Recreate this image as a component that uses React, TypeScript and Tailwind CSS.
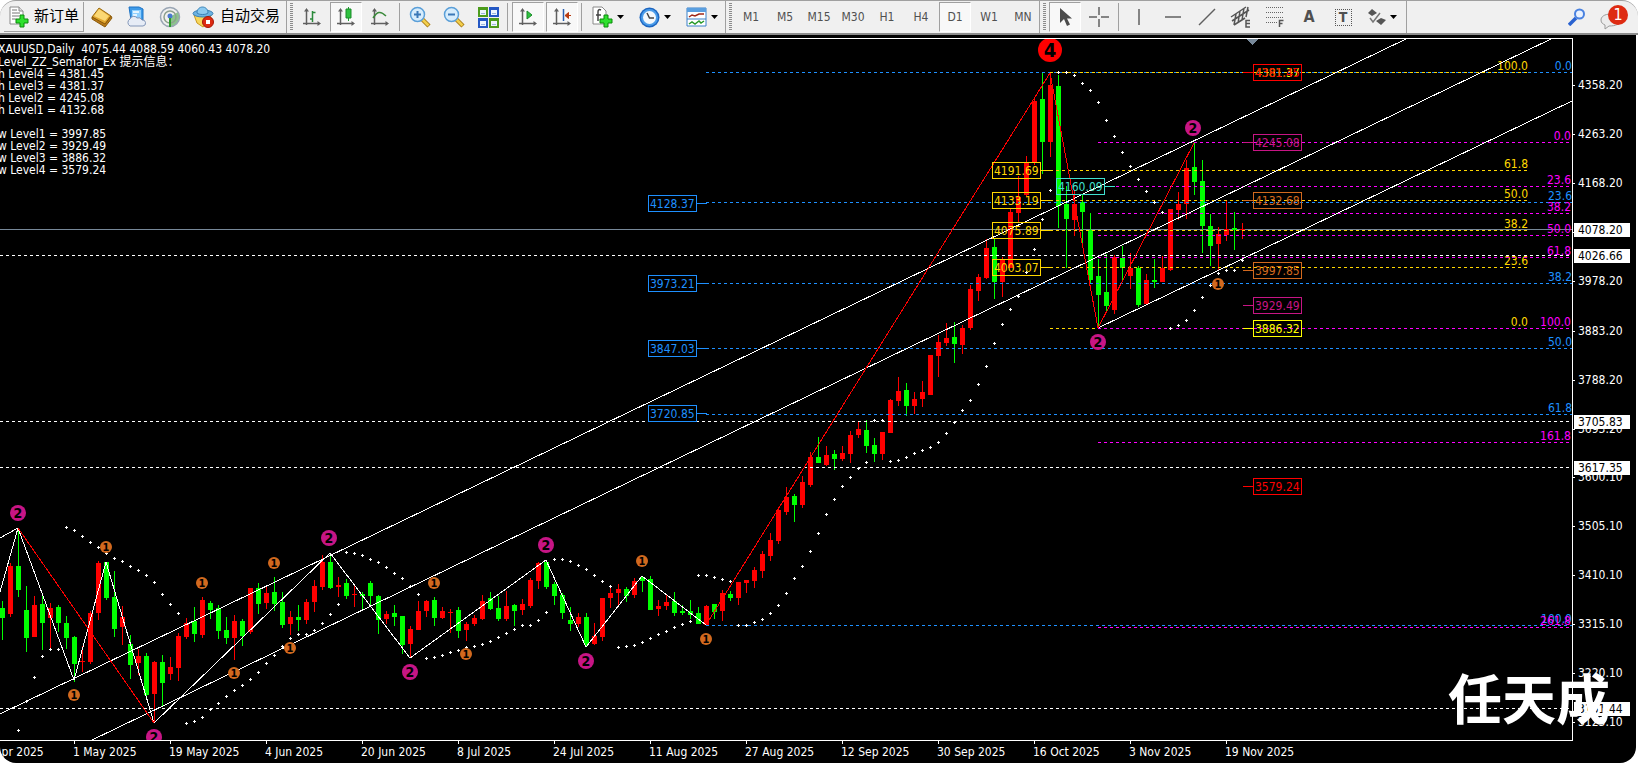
import type { ReactNode } from 'react'

type Candle = [dir: 'u' | 'd', high: number, top: number, bottom: number, low: number]

/* ---------------- SCALE ---------------- */
const TOP = 39
const BAR = 8
const barX = (i: number) => 2 + i * BAR
const priceY = (price: number) => Math.round(84 + (4358.2 - price) / 1.9346)

/* ---------------- SERIES ---------------- */
const CANDLES: Candle[] = [
  ['d', 601, 608, 618, 640], ['u', 563, 566, 614, 617], ['d', 528, 566, 590, 597], ['d', 586, 610, 638, 652],
  ['u', 596, 605, 637, 637], ['d', 595, 604, 623, 650], ['u', 603, 608, 618, 649], ['d', 605, 607, 623, 632],
  ['d', 616, 623, 638, 649], ['d', 636, 637, 664, 682], ['u', 646, 661, 662, 672], ['u', 611, 613, 662, 664],
  ['u', 561, 563, 613, 620], ['d', 562, 562, 598, 600], ['d', 571, 597, 629, 637], ['u', 606, 617, 627, 645],
  ['d', 635, 644, 665, 679], ['u', 649, 656, 663, 675], ['d', 653, 656, 695, 700], ['u', 661, 662, 694, 723],
  ['d', 655, 662, 683, 707], ['u', 657, 667, 674, 680], ['u', 633, 636, 668, 681], ['u', 618, 623, 637, 639],
  ['d', 607, 621, 634, 642], ['u', 597, 600, 635, 638], ['d', 601, 603, 610, 619], ['d', 605, 608, 631, 639],
  ['d', 617, 630, 638, 644], ['u', 615, 621, 638, 660], ['d', 619, 621, 636, 646], ['u', 588, 588, 632, 634],
  ['d', 583, 588, 604, 614], ['u', 587, 593, 603, 609], ['d', 577, 592, 604, 611], ['d', 592, 602, 625, 628],
  ['u', 611, 617, 624, 635], ['d', 605, 617, 620, 631], ['u', 599, 602, 620, 624], ['u', 580, 586, 602, 612],
  ['u', 555, 562, 587, 590], ['d', 553, 562, 588, 589], ['u', 577, 585, 587, 597], ['d', 579, 583, 596, 599],
  ['u', 586, 594, 595, 607], ['d', 592, 594, 596, 610], ['d', 581, 583, 596, 606], ['d', 595, 596, 620, 634],
  ['u', 611, 614, 619, 624], ['d', 605, 613, 617, 626], ['d', 616, 616, 645, 654], ['u', 626, 629, 644, 658],
  ['u', 601, 611, 630, 630], ['u', 600, 601, 611, 617], ['d', 597, 600, 618, 626], ['u', 607, 611, 618, 619],
  ['u', 609, 612, 613, 633], ['d', 607, 610, 631, 638], ['u', 622, 624, 630, 641], ['u', 615, 618, 624, 626],
  ['u', 595, 601, 619, 620], ['d', 592, 598, 609, 610], ['d', 596, 608, 619, 621], ['u', 591, 606, 619, 621],
  ['d', 604, 605, 611, 626], ['u', 599, 604, 610, 615], ['u', 578, 580, 606, 608], ['u', 562, 563, 581, 589],
  ['d', 560, 562, 587, 589], ['d', 582, 584, 596, 605], ['d', 593, 595, 613, 619], ['d', 607, 620, 624, 631],
  ['u', 613, 617, 624, 627], ['d', 613, 617, 645, 647], ['u', 623, 636, 644, 645], ['u', 598, 598, 637, 641],
  ['u', 588, 593, 598, 608], ['u', 584, 589, 593, 606], ['d', 587, 589, 596, 602], ['u', 578, 581, 595, 598],
  ['d', 576, 577, 581, 592], ['d', 576, 579, 610, 610], ['u', 600, 606, 609, 616], ['u', 595, 602, 606, 610],
  ['d', 592, 601, 613, 616], ['d', 605, 611, 613, 615], ['d', 600, 611, 615, 619], ['d', 607, 613, 624, 624],
  ['u', 605, 606, 625, 625], ['d', 604, 604, 612, 619], ['u', 590, 593, 611, 621], ['d', 591, 594, 598, 601],
  ['u', 582, 582, 598, 605], ['u', 580, 580, 583, 593], ['u', 567, 570, 581, 588], ['u', 551, 554, 571, 578],
  ['u', 533, 540, 556, 561], ['u', 507, 510, 541, 544], ['u', 487, 497, 512, 515], ['d', 494, 496, 505, 522],
  ['u', 476, 482, 505, 508], ['u', 452, 457, 485, 487], ['d', 437, 457, 463, 463], ['u', 446, 455, 465, 466],
  ['d', 450, 454, 459, 470], ['u', 446, 453, 459, 461], ['u', 431, 435, 454, 463], ['u', 422, 429, 435, 438],
  ['d', 420, 430, 446, 453], ['d', 438, 445, 454, 462], ['u', 432, 432, 454, 460], ['u', 399, 400, 433, 433],
  ['u', 377, 391, 401, 406], ['d', 383, 390, 406, 416], ['u', 392, 399, 406, 414], ['u', 381, 392, 399, 407],
  ['u', 355, 355, 395, 395], ['u', 335, 342, 356, 377], ['u', 323, 338, 343, 346], ['d', 322, 337, 344, 363],
  ['u', 325, 328, 345, 354], ['u', 285, 289, 328, 330], ['u', 274, 277, 291, 301], ['u', 239, 248, 278, 279],
  ['d', 238, 247, 282, 299], ['u', 257, 260, 282, 297], ['u', 209, 212, 268, 268], ['u', 176, 197, 213, 222],
  ['u', 156, 163, 195, 197], ['u', 98, 101, 163, 165], ['d', 73, 99, 142, 174], ['u', 73, 85, 142, 157],
  ['d', 75, 86, 206, 228], ['d', 186, 204, 219, 268], ['u', 190, 204, 220, 236], ['d', 195, 202, 212, 247],
  ['d', 213, 230, 280, 283], ['d', 259, 276, 295, 328], ['d', 254, 292, 306, 312], ['u', 255, 257, 310, 314],
  ['d', 246, 258, 268, 281], ['u', 253, 268, 276, 289], ['d', 266, 268, 305, 307], ['u', 274, 280, 304, 304],
  ['d', 259, 280, 282, 288], ['u', 256, 268, 282, 282], ['u', 209, 209, 270, 271], ['u', 192, 204, 210, 220],
  ['u', 160, 168, 204, 219], ['d', 143, 167, 182, 195], ['d', 160, 181, 226, 253], ['d', 214, 226, 246, 266],
  ['u', 227, 234, 244, 271], ['u', 200, 229, 235, 241], ['d', 212, 228, 230, 250], ['u', 223, 229, 230, 239],
]

// parabolic SAR, one value per bar starting at bar 2
const SAR = [
  730, 701, 677, 656, 649, 649, 527, 530, 536, 542, 547, 553, 558, 561, 566, 570, 575, 582, 594, 604, 613,
  723, 721, 717, 709, 703, 696, 690, 685, 679, 672, 663, 655, 646, 638, 634, 634, 630, 623, 614, 604,
  552, 553, 555, 559, 562, 567, 573, 578, 586, 594, 658, 657, 655, 652, 650, 647, 646, 644, 641, 637, 633,
  629, 625, 625, 620, 612, 559, 559, 561, 565, 569, 575, 581, 586, 647, 646, 645, 642, 638, 634, 631, 627,
  624, 621, 575, 575, 577, 579, 581, 625, 625, 622, 619, 613, 605, 593, 578, 566, 551, 533, 514, 499, 486,
  477, 468, 462, 420, 420, 461, 460, 457, 453, 450, 447, 442, 433, 422, 410, 400, 384, 366, 343, 324, 309,
  296, 272, 249, 219, 190, 72, 72, 75, 83, 90, 102, 120, 136, 152, 166, 179, 191, 202, 212, 328, 325, 320,
  310, 297, 285, 273, 270, 270, 260,
]

const ZIGZAG = '0,592 18,528 74,680 106,562 154,723 330,553 410,658 546,560 586,647 642,576 706,625'

const CHANNELS = [
  [0, 714, 1406, 39],
  [92, 740, 1551, 39],
  [1098, 328, 1572, 101],
  [0, 538, 18, 528],
]

const FIBS = [
  { color: '#1e90ff', from: 706, to: 1572, rows: [['0.0', 72], ['23.6', 202], ['38.2', 283], ['50.0', 348], ['61.8', 414], ['100.0', 625]] },
  { color: '#ffd700', from: 1050, to: 1528, rows: [['100.0', 72], ['61.8', 170], ['50.0', 200], ['38.2', 230], ['23.6', 267], ['0.0', 328]] },
  { color: '#ff00ff', from: 1098, to: 1571, rows: [['0.0', 142], ['23.6', 186], ['38.2', 213], ['50.0', 235], ['61.8', 257], ['100.0', 328], ['161.8', 442], ['261.8', 627]] },
] as const

const TAGS: [x: number, y: number, color: string, text: string][] = [
  [648, 203, '#1e90ff', '4128.37'],
  [648, 283, '#1e90ff', '3973.21'],
  [648, 348, '#1e90ff', '3847.03'],
  [648, 413, '#1e90ff', '3720.85'],
  [992, 170, '#ffd700', '4191.69'],
  [992, 200, '#ffd700', '4133.19'],
  [992, 230, '#ffd700', '4075.89'],
  [992, 267, '#ffd700', '4003.07'],
  [1056, 186, '#40e0d0', '4160.09'],
  [1253, 72, '#ffff00', '4381.37'],
  [1253, 72, '#ff0000', '4381.45'],
  [1253, 142, '#c71585', '4245.08'],
  [1253, 200, '#d2691e', '4132.68'],
  [1253, 270, '#d2691e', '3997.85'],
  [1253, 305, '#c71585', '3929.49'],
  [1253, 328, '#ffff00', '3886.32'],
  [1253, 486, '#ff0000', '3579.24'],
]

const MARKS: [n: 1 | 2 | 4, x: number, y: number][] = [
  [2, 18, 513], [2, 154, 737], [2, 329, 538], [2, 410, 672], [2, 546, 545], [2, 586, 661], [2, 1193, 128], [2, 1098, 342],
  [1, 106, 547], [1, 202, 583], [1, 274, 563], [1, 234, 673], [1, 290, 648], [1, 74, 695], [1, 434, 583],
  [1, 466, 654], [1, 642, 561], [1, 706, 639], [1, 1218, 284], [4, 1050, 50],
]

const MARK_STYLE = {
  1: { r: 6, fill: '#d2691e', size: 11 },
  2: { r: 8, fill: '#c71585', size: 14 },
  4: { r: 12, fill: '#ff0000', size: 20 },
}

const H_LINES = [4026.66, 3705.83, 3617.35, 3151.44]
const AXIS = [4358.2, 4263.2, 4168.2, 4073.2, 3978.2, 3883.2, 3788.2, 3693.2, 3600.1, 3505.1, 3410.1, 3315.1, 3220.1, 3125.1]
const DATES = [
  '11 Apr 2025', '1 May 2025', '19 May 2025', '4 Jun 2025', '20 Jun 2025', '8 Jul 2025', '24 Jul 2025',
  '11 Aug 2025', '27 Aug 2025', '12 Sep 2025', '30 Sep 2025', '16 Oct 2025', '3 Nov 2025', '19 Nov 2025',
]

const INFO = [
  'h Level4 = 4381.45', 'h Level3 = 4381.37', 'h Level2 = 4245.08', 'h Level1 = 4132.68', '',
  'w Level1 = 3997.85', 'w Level2 = 3929.49', 'w Level3 = 3886.32', 'w Level4 = 3579.24',
]

/* ---------------- TOOLBAR PARTS ---------------- */
function Tool({ label, pressed, children }: { label: string; pressed?: boolean; children: ReactNode }) {
  return (
    <button
      type="button"
      aria-label={label}
      aria-pressed={pressed}
      className={
        pressed
          ? 'flex h-[30px] w-8 shrink-0 items-center justify-center border border-t-[#a0a0a0] border-l-[#a0a0a0] border-r-white border-b-white bg-[#f8f8f8] text-xs text-[#505050]'
          : 'flex h-[30px] w-8 shrink-0 items-center justify-center text-xs text-[#505050]'
      }
    >
      {children}
    </button>
  )
}

function DropTool({ label, children }: { label: string; children: ReactNode }) {
  return (
    <button type="button" aria-label={label} className="flex h-[30px] w-[45px] shrink-0 items-center gap-1 pl-1.5">
      {children}
      <svg width="8" height="4" viewBox="0 0 8 4"><path d="M0 0h7L3.500 4z" fill="#000" /></svg>
    </button>
  )
}

const Sep = () => <div className="mx-px h-7 w-0.5 shrink-0 border-l border-[#a0a0a0]" />

function Group({ grip = true, children }: { grip?: boolean; children: ReactNode }) {
  return (
    <div className="flex h-8 shrink-0 items-center gap-0.5 border-r border-[#a0a0a0]">
      {grip && (
        <svg width="7" height="28" viewBox="0 0 7 28" shapeRendering="crispEdges">
          <path d="M4.500 0v28" stroke="#8c8c8c" strokeWidth="3" strokeDasharray="1 1" />
        </svg>
      )}
      {children}
    </div>
  )
}

/* ---------------- ICONS ---------------- */
function Axes({ children }: { children?: ReactNode }) {
  return (
    <svg width="20" height="20" viewBox="0 0 20 20" fill="none">
      <path d="M4.500 3v15M1 16.500h16" stroke="#606060" strokeWidth="1.500" />
      <path d="M2 4.500 4.500 1 7 4.500zM15.500 14l3.500 2.500-3.500 2.500z" fill="#606060" />
      {children}
    </svg>
  )
}

const PlusGreen = () => (
  <path d="M12 9h4v4h4v4h-4v4h-4v-4H8v-4h4z" fill="#2ee02e" stroke="#0a8a0a" />
)

const NewOrderIcon = () => (
  <svg width="22" height="22" viewBox="0 0 22 22">
    <path d="M2 1h9l4 4v13H2z" fill="#fff" stroke="#8a8a8a" />
    <path d="M11 1v4h4" fill="#ddd" stroke="#8a8a8a" />
    <path d="M4 4h5M4 7h8M4 10h7M4 13h4" stroke="#777" />
    <PlusGreen />
  </svg>
)

const BookIcon = () => (
  <svg width="22" height="22" viewBox="0 0 22 22">
    <path d="M1 11 8 2l12 8-6 9z" fill="#e0a52e" stroke="#9a6a10" />
    <path d="M3 10 8 3l10 7-4 5z" fill="#fbd874" />
    <path d="M1 11v2l13 8 7-9-1-2-6 8z" fill="#b97a18" stroke="#8a5a0c" />
  </svg>
)

const ServerIcon = () => (
  <svg width="22" height="22" viewBox="0 0 22 22">
    <path d="M4 1h10l4 2v11H6z" fill="#3f9be8" stroke="#1c72c4" />
    <path d="M7 4h9v8H7z" fill="#8fd0ff" />
    <path d="M8 6h6M8 9h4" stroke="#fff" strokeWidth="1.500" />
    <path d="M5 20a4 4 0 0 1 0-7 4 4 0 0 1 7-1 4 4 0 0 1 5 2 3 3 0 0 1 1 6z" fill="#e6ecf6" stroke="#8296b8" />
  </svg>
)

const SignalIcon = () => (
  <svg width="22" height="22" viewBox="0 0 22 22" fill="none">
    <path d="M11 11v10a10 10 0 0 0 8-15z" fill="#8cc48c" />
    <circle cx="11" cy="11" r="9.500" stroke="#9aa6b4" strokeWidth="1.500" />
    <circle cx="11" cy="11" r="6" stroke="#8ea08e" strokeWidth="1.500" />
    <circle cx="11" cy="10" r="2.500" fill="#4a7ad0" />
    <path d="M11 12v9" stroke="#2e9a2e" strokeWidth="2" />
  </svg>
)

const AutoTradeIcon = () => (
  <svg width="22" height="22" viewBox="0 0 22 22">
    <path d="M2 9h17l-3 8-5 4-6-4z" fill="#f7d75c" stroke="#c9981e" />
    <ellipse cx="11" cy="7.500" rx="10" ry="3.500" fill="#6db3e2" stroke="#3a80b4" />
    <path d="M5 7c0-8 11-8 11 0-2 2-9 2-11 0z" fill="#8ccaf0" stroke="#3a80b4" />
    <circle cx="16" cy="16" r="5.500" fill="#dd2a12" stroke="#a61806" />
    <path d="M14 14h4v4h-4z" fill="#fff" />
  </svg>
)

function ZoomIcon({ plus }: { plus?: boolean }) {
  return (
    <svg width="22" height="22" viewBox="0 0 22 22" fill="none">
      <path d="m13 13 7 7" stroke="#a87c18" strokeWidth="4.500" />
      <path d="m13 13 6.500 6.500" stroke="#f2cf4c" strokeWidth="2.500" />
      <circle cx="8.500" cy="8.500" r="7" fill="#d6ecfc" stroke="#5a9fd8" strokeWidth="1.500" />
      <path d={plus ? 'M5 8.500h7M8.500 5v7' : 'M5 8.500h7'} stroke="#3a78b8" strokeWidth="2" />
    </svg>
  )
}

const TileIcon = () => (
  <svg width="21" height="21" viewBox="0 0 21 21" shapeRendering="crispEdges">
    <path d="M0 0h10v10H0zM11 11h10v10H11z" fill="#4c9c1c" />
    <path d="M11 0h10v10H11zM0 11h10v10H0z" fill="#2458c4" />
    <path d="M2 3h6v5H2zM13 3h6v5h-6zM2 14h6v5H2zM13 14h6v5h-6z" fill="#eef6ff" />
    <path d="M3 6h4M14 6h4M3 17h4M14 17h4" stroke="#9cb8dc" />
  </svg>
)

const IndicatorIcon = () => (
  <svg width="21" height="22" viewBox="0 0 21 22">
    <path d="M1 1h9l4 4v13H1z" fill="#fff" stroke="#8a8a8a" />
    <path d="M9 4c-2-1-3 0-3 2v9M4 9h5" fill="none" stroke="#444" strokeWidth="1.500" />
    <PlusGreen />
  </svg>
)

const ClockIcon = () => (
  <svg width="21" height="21" viewBox="0 0 21 21">
    <circle cx="10.500" cy="10.500" r="10" fill="#1d66c0" />
    <circle cx="10.500" cy="10.500" r="8.500" fill="#4a9cea" />
    <circle cx="10.500" cy="10.500" r="6.500" fill="#f4f8fc" />
    <path d="M8 6l2.500 5H15" fill="none" stroke="#444" strokeWidth="1.500" />
  </svg>
)

const TemplateIcon = () => (
  <svg width="21" height="20" viewBox="0 0 21 20" fill="none">
    <path d="M1 1h19v18H1z" fill="#fff" stroke="#3a80c8" />
    <path d="M1 1h19v4H1z" fill="#5a9fe0" />
    <path d="M1 12h19" stroke="#3a80c8" />
    <path d="m3 10 3-2 3 1 4-2 5 0" stroke="#a02818" strokeWidth="1.500" />
    <path d="m3 17 3-2 3 2 4-3 2 2 3-2" stroke="#2a9a2a" strokeWidth="1.500" />
  </svg>
)

const CursorIcon = () => (
  <svg width="20" height="20" viewBox="0 0 20 20">
    <path d="M5 1v15l4-4 3 7 3-1.500-3-6h5z" fill="#4c4c4c" />
  </svg>
)

function LineIcon({ d }: { d: string }) {
  return (
    <svg width="20" height="20" viewBox="0 0 20 20" fill="none">
      <path d={d} stroke="#606060" strokeWidth="1.500" />
    </svg>
  )
}

const ChannelIcon = () => (
  <svg width="22" height="22" viewBox="0 0 22 22" fill="none">
    <path d="M1 11 16 1M2 15 19 4M4 19 15 12M6 8 4 19M10 5 8 17M14 2l-2 12M18 1l-2 10" stroke="#555" strokeWidth="1.500" />
    <path d="M20 14.500h-4V21h4M16 17.500h4" stroke="#555" strokeWidth="1.500" />
  </svg>
)

const FiboIcon = () => (
  <svg width="20" height="22" viewBox="0 0 20 22" fill="none">
    <path d="M1 1.500h18M1 6.500h18M1 11.500h18M1 16.500h11" stroke="#666" strokeDasharray="1 1" />
    <path d="M18.500 14.500h-4V21M14.500 17.500h3" stroke="#555" strokeWidth="1.500" />
  </svg>
)

const ShapesIcon = () => (
  <svg width="19" height="18" viewBox="0 0 19 18">
    <path d="m5 1 5 4-5 3-4-3zM14 10l5 2-5 5-5-4z" fill="#555" />
    <path d="m3 10 3 4 7-9" fill="none" stroke="#777" strokeWidth="1.500" />
  </svg>
)

const FRAMES = ['M1', 'M5', 'M15', 'M30', 'H1', 'H4', 'D1', 'W1', 'MN']

function Toolbar() {
  return (
    <header className="flex h-[35px] items-center overflow-hidden rounded-t-2xl border-t border-b-2 border-t-[#a0a0a0] border-b-[#8c8c8c] bg-[#f0f0f0] pl-1">
      <Group grip={false}>
        <button type="button" className="flex h-[30px] w-20 shrink-0 items-center gap-1 border-r border-b border-[#a0a0a0] pl-1 text-[15px] whitespace-nowrap text-black">
          <NewOrderIcon />
          新订单
        </button>
        <Tool label="市场报价"><BookIcon /></Tool>
        <Tool label="导航"><ServerIcon /></Tool>
        <Tool label="信号"><SignalIcon /></Tool>
        <button type="button" className="flex h-[30px] w-[98px] shrink-0 items-center gap-1.5 pl-1 text-[15px] whitespace-nowrap text-black">
          <AutoTradeIcon />
          自动交易
        </button>
      </Group>

      <Group>
        <Tool label="柱状图">
          <Axes><path d="M10.500 4v11M8 12h2.500M10.500 5.500h3" stroke="#2a8a3a" strokeWidth="1.500" /></Axes>
        </Tool>
        <Tool label="K线图" pressed>
          <Axes>
            <path d="M12.500 0v14" stroke="#1f9a2f" />
            <path d="M10 2h5v9h-5z" fill="#2fc23f" stroke="#1a8a2a" />
          </Axes>
        </Tool>
        <Tool label="折线图">
          <Axes><path d="M3 11c4-6 7-8 13-2" stroke="#3a8a3a" strokeWidth="1.500" /></Axes>
        </Tool>
        <Sep />
        <Tool label="放大"><ZoomIcon plus /></Tool>
        <Tool label="缩小"><ZoomIcon /></Tool>
        <Tool label="平铺窗口"><TileIcon /></Tool>
        <Sep />
        <Tool label="自动滚动" pressed>
          <Axes><path d="M9 4v8l5-4z" fill="#2fc23f" stroke="#1a8a2a" /></Axes>
        </Tool>
        <Tool label="图表平移" pressed>
          <Axes>
            <path d="M11.500 2v12" stroke="#2a60b0" strokeWidth="1.500" />
            <path d="M13 8.500h6M16.500 5.500l-3.500 3 3.500 3z" stroke="#b83a10" fill="#b83a10" />
          </Axes>
        </Tool>
        <Sep />
        <DropTool label="指标列表"><IndicatorIcon /></DropTool>
        <DropTool label="时间周期"><ClockIcon /></DropTool>
        <DropTool label="模板"><TemplateIcon /></DropTool>
      </Group>

      <Group>
        {FRAMES.map(f => (
          <Tool key={f} label={f} pressed={f === 'D1'}>{f}</Tool>
        ))}
      </Group>

      <Group>
        <Tool label="光标" pressed><CursorIcon /></Tool>
        <Tool label="十字准线"><LineIcon d="M10 0v8M10 12v8M0 10h8M12 10h8" /></Tool>
        <Sep />
        <Tool label="垂直线"><LineIcon d="M10 2v16" /></Tool>
        <Tool label="水平线"><LineIcon d="M2 10h16" /></Tool>
        <Tool label="趋势线"><LineIcon d="M2 18 18 2" /></Tool>
        <Tool label="等距通道"><ChannelIcon /></Tool>
        <Tool label="斐波那契"><FiboIcon /></Tool>
        <Tool label="文本"><span className="text-base font-bold">A</span></Tool>
        <Tool label="文本标签">
          <span className="flex size-[17px] items-center justify-center border border-dotted border-[#555] text-sm font-bold">T</span>
        </Tool>
        <DropTool label="箭头"><ShapesIcon /></DropTool>
      </Group>

      <div className="ml-auto flex items-center gap-3 pr-2">
        <button type="button" aria-label="搜索">
          <svg width="18" height="18" viewBox="0 0 18 18" fill="none">
            <path d="m8 10-7 7" stroke="#2a62d0" strokeWidth="3.500" />
            <circle cx="11.500" cy="6" r="4.500" fill="#eaf2ff" stroke="#4a82e0" strokeWidth="2" />
          </svg>
        </button>
        <button type="button" aria-label="消息" className="relative h-7 w-8">
          <svg width="32" height="28" viewBox="0 0 32 28">
            <path d="M13 11c-7 0-10 3-10 6s2 4 4 5v4l4-3c7 0 11-2 11-6z" fill="#ececec" stroke="#9a9a9a" />
          </svg>
          <span className="absolute top-0.5 right-0.5 flex size-5 items-center justify-center rounded-full bg-[#de2b12] text-base leading-none text-white">1</span>
        </button>
      </div>
    </header>
  )
}

/* ---------------- CHART ---------------- */
function Plot() {
  return (
    <svg className="absolute inset-0 h-full w-full" fontSize="12" shapeRendering="crispEdges" role="img" aria-label="XAUUSD">
      <g transform={`translate(0 ${-TOP})`}>
        <line x1="0" x2="100%" y1="229.500" y2="229.500" stroke="#778899" />

        {CANDLES.map(([dir, high, top, bottom, low], i) => {
          const color = dir === 'u' ? '#ff0000' : '#00ff00'
          return (
            <g key={i} fill={color}>
              <rect x={barX(i)} y={high} width="1" height={low - high} />
              <rect x={barX(i) - 2} y={top} width="5" height={bottom - top} />
            </g>
          )
        })}

        {H_LINES.map(p => (
          <line key={p} x1="0" x2="100%" y1={priceY(p) + 0.5} y2={priceY(p) + 0.5} stroke="#fff" strokeDasharray="3 3" />
        ))}

        {FIBS.map(f =>
          f.rows.map(([text, y]) => (
            <g key={f.color + text}>
              <line x1={f.from} x2={f.to} y1={y + 0.5} y2={y + 0.5} stroke={f.color} strokeDasharray="3 3" />
              <text x={f.to} y={y - 2} textAnchor="end" fill={f.color}>{text}</text>
            </g>
          ))
        )}

        {CHANNELS.map(([x1, y1, x2, y2]) => (
          <line key={x1 + '-' + y1} x1={x1} y1={y1} x2={x2} y2={y2} stroke="#fff" />
        ))}
        <polyline points={ZIGZAG} fill="none" stroke="#fff" />
        <polyline points="18,528 154,723" fill="none" stroke="#f00" />
        <polyline points="706,625 1050,73 1098,328 1194,143" fill="none" stroke="#f00" />

        {SAR.map((y, i) => (
          <path key={i} d={`M${barX(i + 2) - 1} ${y + 0.5}h3M${barX(i + 2) + 0.5} ${y - 1}v3`} stroke="#fff" />
        ))}

        {TAGS.map(([x, y, color, text]) => (
          <g key={text}>
            <rect x={x + 0.5} y={y - 7.5} width="48" height="16" fill="none" stroke={color} />
            <line
              x1={x > 1200 ? x - 10 : x + 49}
              x2={x > 1200 ? x : x + 59}
              y1={y + 0.5}
              y2={y + 0.5}
              stroke={color}
            />
            <text x={x + 2} y={y + 5} fill={color}>{text}</text>
          </g>
        ))}

        {MARKS.map(([n, x, y]) => {
          const m = MARK_STYLE[n]
          return (
            <g key={x + '-' + y} shapeRendering="auto">
              <circle cx={x} cy={y} r={m.r} fill={m.fill} />
              <text x={x} y={y} dy="0.36em" textAnchor="middle" fontSize={m.size} fontWeight="bold" fill="#000">{n}</text>
            </g>
          )
        })}

        <path d="M1246 39h12l-6 6z" fill="#778899" />
      </g>
    </svg>
  )
}

function PriceTag({ price }: { price: number }) {
  return (
    <div
      className="absolute right-1.5 left-px h-3.5 bg-white pl-1 leading-[14px] text-black"
      style={{ top: priceY(price) - TOP - 5 }}
    >
      {price.toFixed(2)}
    </div>
  )
}

export default function App() {
  return (
    <div className="flex min-h-screen flex-col bg-white font-['DejaVu_Sans_Condensed','Noto_Sans','Noto_Sans_CJK_SC',sans-serif] text-xs">
      <Toolbar />

      <main className="relative mr-0.5 grid flex-1 grid-cols-[1fr_63px] grid-rows-[1fr_22px] overflow-hidden rounded-b-2xl bg-black pt-[3px] text-white">
        <section className="relative overflow-hidden border border-l-0 border-white">
          <Plot />
          <div className="relative whitespace-pre">
            <p className="-ml-0.5 pt-[3px] leading-[14px]">XAUUSD,Daily  4075.44 4088.59 4060.43 4078.20</p>
            <p className="-ml-0.5 leading-3">Level_ZZ_Semafor_Ex 提示信息：</p>
            {INFO.map((line, i) => (
              <p key={i} className="-ml-0.5 h-3 leading-3">{line}</p>
            ))}
          </div>
        </section>

        {/* Price axis */}
        <aside className="relative">
          {AXIS.map(p => (
            <div
              key={p}
              className="absolute left-0 flex items-center gap-[3px] leading-[14px] before:h-px before:w-0.5 before:bg-white"
              style={{ top: priceY(p) - TOP - 5 }}
            >
              {p.toFixed(2)}
            </div>
          ))}
          <PriceTag price={4078.2} />
          {H_LINES.map(p => <PriceTag key={p} price={p} />)}
        </aside>

        {/* Time axis */}
        <footer className="relative col-span-2 overflow-hidden">
          {DATES.map((d, i) => (
            <div
              key={d}
              className="absolute top-0 pt-1 leading-[14px] whitespace-nowrap before:absolute before:top-0 before:left-px before:h-[3px] before:w-px before:bg-white"
              style={{ left: 73 + (i - 1) * 12 * BAR }}
            >
              {d}
            </div>
          ))}
        </footer>

        <div className="pointer-events-none absolute right-[26px] bottom-9 font-['Noto_Sans_CJK_SC',sans-serif] text-[54px] leading-[60px] font-bold">
          任天成
        </div>
      </main>
    </div>
  )
}
